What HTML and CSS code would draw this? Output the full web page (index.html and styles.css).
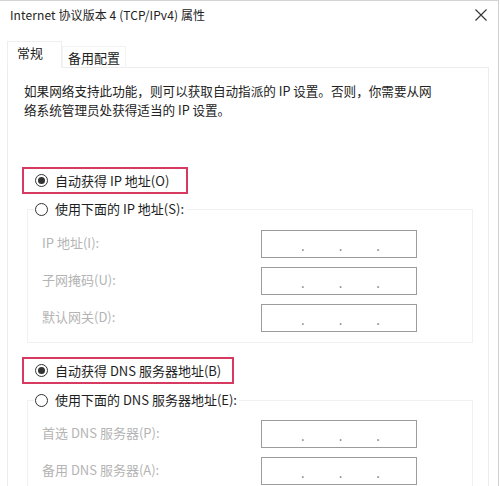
FILE: index.html
```html
<!DOCTYPE html>
<html lang="zh-CN">
<head>
<meta charset="utf-8">
<title>Internet 协议版本 4 (TCP/IPv4) 属性</title>
<link rel="stylesheet" href="styles.css">
</head>
<body>
<div class="window">
  <div class="titlebar">
    <span class="title">Internet 协议版本 4 (TCP/IPv4) 属性</span>
    <svg class="close" width="12" height="12" viewBox="0 0 12 12"><path d="M0.5 0.5 L11.5 11.5 M11.5 0.5 L0.5 11.5" stroke="#333" stroke-width="1.1" fill="none"/></svg>
  </div>
  <div class="tabs">
    <div class="tab active">常规</div>
    <div class="tab">备用配置</div>
  </div>
  <div class="panel">
    <p class="intro">如果网络支持此功能，则可以获取自动指派的 IP 设置。否则，你需要从网<br>络系统管理员处获得适当的 IP 设置。</p>

    <div class="highlight hl-ip">
      <label class="radio"><span class="dot checked"></span><span>自动获得 IP 地址(O)</span></label>
    </div>
    <fieldset class="group">
      <legend><label class="radio"><span class="dot"></span><span>使用下面的 IP 地址(S):</span></label></legend>
      <div class="rows">
        <span class="lbl">IP 地址(I):</span>
        <div class="ipbox"><span>.</span><span>.</span><span>.</span></div>
        <span class="lbl">子网掩码(U):</span>
        <div class="ipbox"><span>.</span><span>.</span><span>.</span></div>
        <span class="lbl">默认网关(D):</span>
        <div class="ipbox"><span>.</span><span>.</span><span>.</span></div>
      </div>
    </fieldset>

    <div class="highlight hl-dns">
      <label class="radio"><span class="dot checked"></span><span>自动获得 DNS 服务器地址(B)</span></label>
    </div>
    <fieldset class="group dns">
      <legend><label class="radio"><span class="dot"></span><span>使用下面的 DNS 服务器地址(E):</span></label></legend>
      <div class="rows">
        <span class="lbl">首选 DNS 服务器(P):</span>
        <div class="ipbox"><span>.</span><span>.</span><span>.</span></div>
        <span class="lbl">备用 DNS 服务器(A):</span>
        <div class="ipbox"><span>.</span><span>.</span><span>.</span></div>
      </div>
    </fieldset>
  </div>
</div>
</body>
</html>
```
FILE: styles.css
```css
html, body {
  margin: 0;
  padding: 0;
  background: #fff;
}
body {
  width: 500px;
  height: 486px;
  overflow: hidden;
  font-family: "Noto Sans CJK SC", "Noto Sans", sans-serif;
  font-size: 13px;
  color: #1e1e1e;
}
.window {
  width: 498px;
  height: 485px;
  border-top: 1px solid #d4d4d4;
  border-right: 1px solid #cfcfcf;
  overflow: hidden;
}
.titlebar {
  display: flex;
  align-items: center;
  justify-content: space-between;
  height: 20px;
  padding: 4px 11px 0 10px;
  line-height: 20px;
}
.title {
  color: #222;
  font-size: 12px;
  letter-spacing: 0.1px;
}
.close {
  display: block;
}
.tabs {
  display: flex;
  align-items: flex-end;
  margin: 17px 0 0 7px;
  height: 26px;
  position: relative;
  z-index: 1;
}
.tab {
  line-height: 20px;
  padding: 1px 5px 0 5px;
  height: 20px;
  border: 1px solid #f3f3f3;
  border-bottom: none;
  color: #222;
}
.tab.active {
  padding: 1px 18px 4px 9px;
  border-color: #eeeeee;
  background: #fff;
  height: 21px;
}
.panel {
  margin-left: 7px;
  width: 480px;
  height: 430px;
  border: 1px solid #ececec;
  margin-top: -1px;
}
.intro {
  margin: 13px 0 0 16px;
  line-height: 19px;
  font-size: 12.6px;
  color: #222;
  white-space: nowrap;
}
.highlight {
  margin-left: 14px;
  border: 2px solid #d73a60;
  height: 23px;
  display: flex;
  align-items: center;
}
.hl-ip {
  margin-top: 48px;
  width: 162px;
}
.hl-dns {
  margin-top: 14px;
  width: 208px;
}
.radio {
  display: flex;
  align-items: center;
  gap: 7px;
  line-height: 20px;
  color: #1e1e1e;
}
.highlight .radio {
  margin-left: 11px;
}
.dot {
  width: 11px;
  height: 11px;
  border: 1px solid #333;
  border-radius: 50%;
  display: flex;
  align-items: center;
  justify-content: center;
  box-sizing: content-box;
}
.dot.checked::after {
  content: "";
  width: 7px;
  height: 7px;
  border-radius: 50%;
  background: #333;
}
.group {
  margin: 5px 0 0 19px;
  width: 444px;
  padding: 0 0 10px 0;
  border: 1px solid #f1f1f1;
  min-width: 0;
}
.group legend {
  margin-left: 6px;
  padding: 0 2px 0 1px;
}
.group.dns {
  margin-top: 6px;
}
.rows {
  display: grid;
  grid-template-columns: 219px 156px;
  grid-auto-rows: 28px;
  row-gap: 9px;
  padding: 11px 0 0 14px;
  align-items: center;
}
.dns .rows {
  padding-top: 10px;
}
.lbl {
  color: #b4b4b4;
  line-height: 20px;
  margin-top: -3px;
}
.ipbox {
  height: 26px;
  border: 1px solid #9c9c9c;
  display: flex;
  padding-left: 39px;
  gap: 34px;
  color: #777;
  line-height: 30px;
  box-sizing: content-box;
  width: 115px;
}
```
